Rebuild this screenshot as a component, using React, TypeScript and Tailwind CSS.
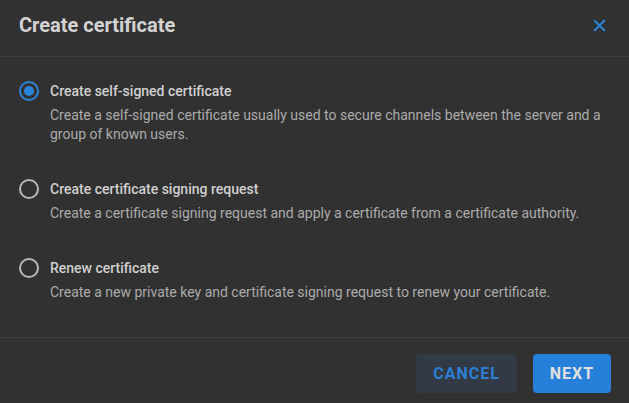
import { X } from "lucide-react";

const options = [
  {
    title: "Create self-signed certificate",
    desc: "Create a self-signed certificate usually used to secure channels between the server and a group of known users.",
  },
  {
    title: "Create certificate signing request",
    desc: "Create a certificate signing request and apply a certificate from a certificate authority.",
  },
  {
    title: "Renew certificate",
    desc: "Create a new private key and certificate signing request to renew your certificate.",
  },
];

export default function App() {
  const selected = 0;

  return (
    <div className="flex h-[403px] w-[629px] flex-col bg-[#313131] font-['Roboto',sans-serif]">
      <div className="flex h-[57px] shrink-0 items-center justify-between border-b border-[#3d3d3d] pb-[6px] pl-[19px] pr-[20px]">
        <h1 className="text-[20px] font-bold text-[#d3d3d3]">Create certificate</h1>
        <X className="h-[19px] w-[19px] text-[#2b83d9]" strokeWidth={2.6} />
      </div>

      <div className="flex flex-1 flex-col px-[19px] pt-[23px]">
        {options.map((o, i) => (
          <div key={o.title} className="flex gap-[11px] pb-[34px]">
            <div
              className={`mt-[1px] flex h-[20px] w-[20px] shrink-0 items-center justify-center rounded-full border-2 ${
                i === selected ? "border-[#2b83d9]" : "border-[#b4b9bf]"
              }`}
            >
              {i === selected && <div className="h-[10px] w-[10px] rounded-full bg-[#2b83d9]" />}
            </div>
            <div className="flex flex-col">
              <div className="text-[14px] font-medium leading-[22px] text-[#cfcfcf]">{o.title}</div>
              <div className="mt-[4px] pr-[8px] text-[14px] leading-[19px] text-[#ababab]">{o.desc}</div>
            </div>
          </div>
        ))}
      </div>

      <div className="flex h-[66px] shrink-0 items-start justify-end gap-[16px] border-t border-[#3d3d3d] pr-[18px] pt-[16px]">
        <button className="h-[39px] w-[101px] rounded-[4px] bg-[#323a45] text-[16px] font-bold tracking-[1px] text-[#2b7fd4]">
          CANCEL
        </button>
        <button className="h-[39px] w-[78px] rounded-[4px] bg-[#2680d9] text-[16px] font-bold tracking-[1px] text-[#e0e0e0]">
          NEXT
        </button>
      </div>
    </div>
  );
}
